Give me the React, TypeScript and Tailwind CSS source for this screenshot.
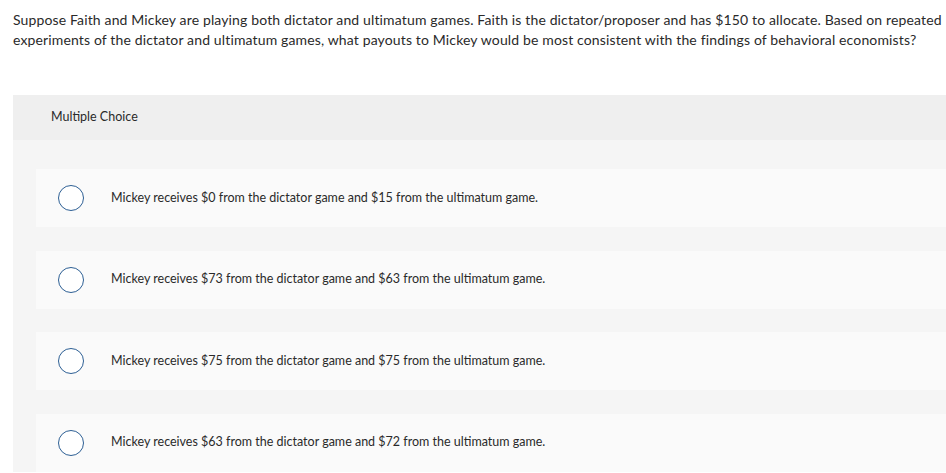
import React from 'react';

const options = [
    'Mickey receives $0 from the dictator game and $15 from the ultimatum game.',
    'Mickey receives $73 from the dictator game and $63 from the ultimatum game.',
    'Mickey receives $75 from the dictator game and $75 from the ultimatum game.',
    'Mickey receives $63 from the dictator game and $72 from the ultimatum game.',
];

function Radio() {
    return (
        <span className="block w-[26px] h-[26px] rounded-full border-[1.5px] border-[#2d5f94] bg-white shrink-0" />
    );
}

export default function App() {
    return (
        <div
            className="w-[946px] h-[473px] overflow-hidden bg-white text-[#333]"
            style={{ fontFamily: 'Lato, "Liberation Sans", sans-serif' }}
        >
            <div className="pl-[13px] pt-[10px] text-[14px] leading-[20px] tracking-[0.14px] whitespace-nowrap text-[#2a2a2a]">
                <p>
                    Suppose Faith and Mickey are playing both dictator and ultimatum games. Faith is the dictator/proposer and has $150 to allocate. Based on repeated
                </p>
                <p>
                    experiments of the dictator and ultimatum games, what payouts to Mickey would be most consistent with the findings of behavioral economists?
                </p>
            </div>

            <div className="ml-[13px] mt-[45px] w-[960px] bg-[#f5f5f5]">
                <div className="h-[45px] bg-[#efefef] pl-[38px] flex items-center text-[12.5px] text-[#2a2a2a]">
                    Multiple Choice
                </div>
                <div className="pl-[23px] pt-[29px] flex flex-col gap-[23.5px]">
                    {options.map((opt) => (
                        <div key={opt} className="h-[58px] bg-[#fafafa] flex items-center pl-[22px]">
                            <Radio />
                            <span className="ml-[27px] text-[12.5px] text-[#2a2a2a]">{opt}</span>
                        </div>
                    ))}
                </div>
            </div>
        </div>
    );
}
